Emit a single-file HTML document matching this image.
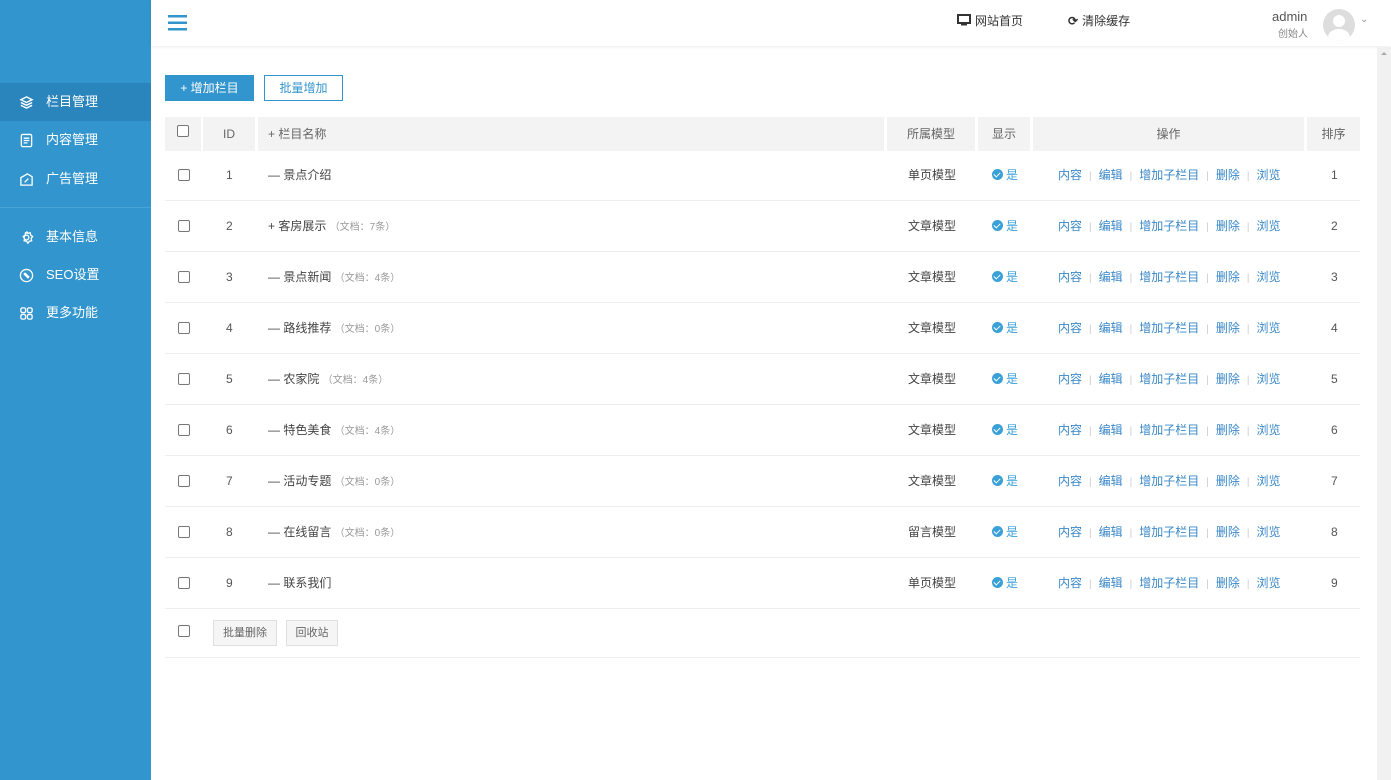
<!DOCTYPE html>
<html><head><meta charset="utf-8"><style>
*{margin:0;padding:0;box-sizing:border-box}
body{width:1391px;height:780px;overflow:hidden;background:#fff;font-family:"Liberation Sans","Noto Sans CJK SC",sans-serif;font-size:12px;color:#555;position:relative}
.side{position:absolute;left:0;top:0;width:151px;height:780px;background:#3395cd}
.nav{position:absolute;left:0;width:151px;height:38px;color:#fff;font-size:13px;line-height:38px;padding-left:46px}
.nav.act{background:#2a85bd}
.nav svg{position:absolute;left:19px;top:12px}
.sep{position:absolute;left:0;top:207px;width:151px;height:1px;background:#4aa3d6}
.top{position:absolute;left:151px;top:0;right:0;height:46px;background:#fff;box-shadow:0 1px 3px rgba(0,0,0,.08)}
.scroll{position:absolute;right:0;top:47px;width:14px;height:733px;background:#f1f1f1}
.abs{position:absolute}
.btn1{position:absolute;left:165px;top:75px;width:89px;height:26px;background:#3395cd;color:#fff;font-size:12px;line-height:26px;text-align:center}
.btn2{position:absolute;left:264px;top:75px;width:79px;height:26px;border:1px solid #3395cd;color:#3395cd;line-height:24px;text-align:center}
.hd div{position:absolute;top:117px;height:34px;background:#f3f3f3;line-height:34px;text-align:center;color:#666}
.row{position:absolute;left:165px;width:1195px;height:51px;border-bottom:1px solid #eee}
.row span{position:absolute;top:0;line-height:51px}
.cb{position:absolute;width:12px;height:12px;border:1px solid #777;border-radius:2px;background:#fff}
.r .cb{left:13px;top:19px}
.g{color:#999;font-size:10px}
.ok{color:#3aa0d8}
.ok i{display:inline-block;width:11px;height:11px;border-radius:50%;background:#3aa0d8;vertical-align:-1px;margin-right:3px;position:relative}
.ok i:after{content:"";position:absolute;left:3px;top:2px;width:3px;height:5px;border:solid #fff;border-width:0 1.5px 1.5px 0;transform:rotate(45deg)}
.ops{color:#3a88c8}
.ops b{font-weight:normal;color:#ccc;margin:0 7px;font-size:10px}
.fb{position:absolute;top:620px;height:26px;background:#f5f5f5;border:1px solid #e0e0e0;line-height:24px;text-align:center;font-size:11px;color:#666}
.t{color:#444}
</style></head><body>
<div class="side">
 <div class="nav act" style="top:83px"><svg width="15" height="15" viewBox="0 0 16 16" fill="none" stroke="#fff" stroke-width="1.5"><path d="M8 2 L14 5 L8 8 L2 5Z"/><path d="M2 8 L8 11 L14 8"/><path d="M2 11 L8 14 L14 11"/></svg>栏目管理</div>
 <div class="nav" style="top:121px"><svg width="15" height="15" viewBox="0 0 16 16" fill="none" stroke="#fff" stroke-width="1.4"><rect x="2.5" y="1.5" width="11" height="13" rx="1.5"/><path d="M5 5.5h6M5 8h6M5 10.5h4"/></svg>内容管理</div>
 <div class="nav" style="top:160px"><svg width="15" height="15" viewBox="0 0 16 16" fill="none" stroke="#fff" stroke-width="1.4"><path d="M2 6 L9 2 L14 5 V14 H2Z"/><path d="M6 11 L10 7"/></svg>广告管理</div>
 <div class="sep"></div>
 <div class="nav" style="top:218px"><svg width="15" height="15" viewBox="0 0 16 16" fill="none" stroke="#fff" stroke-width="1.4"><circle cx="8" cy="8" r="2.5"/><path d="M8 1.5l1.5 2 2.5-.5.5 2.5 2 1.5-1.5 2 .5 2.5-2.5.5-1.5 2-1.5-2-2.5-.5.5-2.5-1.5-2 2-1.5.5-2.5 2.5.5z"/></svg>基本信息</div>
 <div class="nav" style="top:256px"><svg width="15" height="15" viewBox="0 0 16 16" fill="none" stroke="#fff" stroke-width="1.4"><circle cx="8" cy="8" r="6.5"/><path d="M5 6l5 5M6 5l5 5"/></svg>SEO设置</div>
 <div class="nav" style="top:294px"><svg width="15" height="15" viewBox="0 0 16 16" fill="none" stroke="#fff" stroke-width="1.4"><rect x="2" y="2" width="5" height="5" rx="1.5"/><rect x="9" y="2" width="5" height="5" rx="1.5"/><rect x="2" y="9" width="5" height="5" rx="1.5"/><rect x="9" y="9" width="5" height="5" rx="1.5"/></svg>更多功能</div>
</div>
<div class="top">
 <svg class="abs" style="left:17px;top:15px" width="19" height="16"><rect y="0" width="19" height="2.5" fill="#3395cd"/><rect y="6.5" width="19" height="2.5" fill="#3395cd"/><rect y="13" width="19" height="2.5" fill="#3395cd"/></svg>
 <div class="abs" style="left:806px;top:12px;font-size:12px;color:#333"><svg width="14" height="12" style="vertical-align:-1px;margin-right:4px"><rect x="1" y="1" width="12" height="8" fill="none" stroke="#333" stroke-width="2"/><rect x="4" y="10" width="6" height="1.5" fill="#333"/></svg>网站首页</div>
 <div class="abs" style="left:917px;top:12px;font-size:12px;color:#333"><span style="font-weight:bold;margin-right:4px">⟳</span>清除缓存</div>
 <div class="abs" style="left:1121px;top:9px;font-size:13px;color:#555">admin</div>
 <div class="abs" style="left:1127px;top:25px;font-size:10px;color:#888">创始人</div>
 <div class="abs" style="left:1172px;top:9px;width:32px;height:32px;border-radius:50%;background:#ddd;overflow:hidden"><div style="position:absolute;left:10px;top:6px;width:12px;height:12px;border-radius:50%;background:#fff"></div><div style="position:absolute;left:5px;top:20px;width:22px;height:16px;border-radius:50%;background:#fff"></div></div>
 <div class="abs" style="left:1209px;top:14px;font-size:10px;color:#999">⌄</div>
</div>
<div class="scroll"><div style="position:absolute;left:4px;top:5px;border:3px solid transparent;border-bottom-color:#aaa;border-top:0"></div></div>
<div class="btn1">+ 增加栏目</div>
<div class="btn2">批量增加</div>
<div class="hd">
 <div style="left:165px;width:36px"><span class="cb" style="position:absolute;left:12px;top:8px"></span></div>
 <div style="left:203px;width:52px">ID</div>
 <div style="left:258px;width:626px;text-align:left;padding-left:10px">+ 栏目名称</div>
 <div style="left:887px;width:88px">所属模型</div>
 <div style="left:978px;width:52px">显示</div>
 <div style="left:1033px;width:271px">操作</div>
 <div style="left:1307px;width:53px">排序</div>
</div>
<div class="row r" style="top:150px"><div class="cb"></div><span style="left:61px">1</span><span class="t" style="left:103px">— 景点介绍</span><span class="t" style="left:743px">单页模型</span><span class="ok" style="left:827px"><i></i>是</span><span class="ops" style="left:893px">内容<b>|</b>编辑<b>|</b>增加子栏目<b>|</b>删除<b>|</b>浏览</span><span style="left:1166px">1</span></div>
<div class="row r" style="top:201px"><div class="cb"></div><span style="left:61px">2</span><span class="t" style="left:103px">+ 客房展示 <i class="g" style="font-style:normal">（文档：7条）</i></span><span class="t" style="left:743px">文章模型</span><span class="ok" style="left:827px"><i></i>是</span><span class="ops" style="left:893px">内容<b>|</b>编辑<b>|</b>增加子栏目<b>|</b>删除<b>|</b>浏览</span><span style="left:1166px">2</span></div>
<div class="row r" style="top:252px"><div class="cb"></div><span style="left:61px">3</span><span class="t" style="left:103px">— 景点新闻 <i class="g" style="font-style:normal">（文档：4条）</i></span><span class="t" style="left:743px">文章模型</span><span class="ok" style="left:827px"><i></i>是</span><span class="ops" style="left:893px">内容<b>|</b>编辑<b>|</b>增加子栏目<b>|</b>删除<b>|</b>浏览</span><span style="left:1166px">3</span></div>
<div class="row r" style="top:303px"><div class="cb"></div><span style="left:61px">4</span><span class="t" style="left:103px">— 路线推荐 <i class="g" style="font-style:normal">（文档：0条）</i></span><span class="t" style="left:743px">文章模型</span><span class="ok" style="left:827px"><i></i>是</span><span class="ops" style="left:893px">内容<b>|</b>编辑<b>|</b>增加子栏目<b>|</b>删除<b>|</b>浏览</span><span style="left:1166px">4</span></div>
<div class="row r" style="top:354px"><div class="cb"></div><span style="left:61px">5</span><span class="t" style="left:103px">— 农家院 <i class="g" style="font-style:normal">（文档：4条）</i></span><span class="t" style="left:743px">文章模型</span><span class="ok" style="left:827px"><i></i>是</span><span class="ops" style="left:893px">内容<b>|</b>编辑<b>|</b>增加子栏目<b>|</b>删除<b>|</b>浏览</span><span style="left:1166px">5</span></div>
<div class="row r" style="top:405px"><div class="cb"></div><span style="left:61px">6</span><span class="t" style="left:103px">— 特色美食 <i class="g" style="font-style:normal">（文档：4条）</i></span><span class="t" style="left:743px">文章模型</span><span class="ok" style="left:827px"><i></i>是</span><span class="ops" style="left:893px">内容<b>|</b>编辑<b>|</b>增加子栏目<b>|</b>删除<b>|</b>浏览</span><span style="left:1166px">6</span></div>
<div class="row r" style="top:456px"><div class="cb"></div><span style="left:61px">7</span><span class="t" style="left:103px">— 活动专题 <i class="g" style="font-style:normal">（文档：0条）</i></span><span class="t" style="left:743px">文章模型</span><span class="ok" style="left:827px"><i></i>是</span><span class="ops" style="left:893px">内容<b>|</b>编辑<b>|</b>增加子栏目<b>|</b>删除<b>|</b>浏览</span><span style="left:1166px">7</span></div>
<div class="row r" style="top:507px"><div class="cb"></div><span style="left:61px">8</span><span class="t" style="left:103px">— 在线留言 <i class="g" style="font-style:normal">（文档：0条）</i></span><span class="t" style="left:743px">留言模型</span><span class="ok" style="left:827px"><i></i>是</span><span class="ops" style="left:893px">内容<b>|</b>编辑<b>|</b>增加子栏目<b>|</b>删除<b>|</b>浏览</span><span style="left:1166px">8</span></div>
<div class="row r" style="top:558px"><div class="cb"></div><span style="left:61px">9</span><span class="t" style="left:103px">— 联系我们</span><span class="t" style="left:743px">单页模型</span><span class="ok" style="left:827px"><i></i>是</span><span class="ops" style="left:893px">内容<b>|</b>编辑<b>|</b>增加子栏目<b>|</b>删除<b>|</b>浏览</span><span style="left:1166px">9</span></div>
<div class="row" style="top:609px;height:49px"></div>
<div class="cb" style="left:178px;top:625px"></div>
<div class="fb" style="left:213px;width:64px">批量删除</div>
<div class="fb" style="left:286px;width:52px">回收站</div>
</body></html>
